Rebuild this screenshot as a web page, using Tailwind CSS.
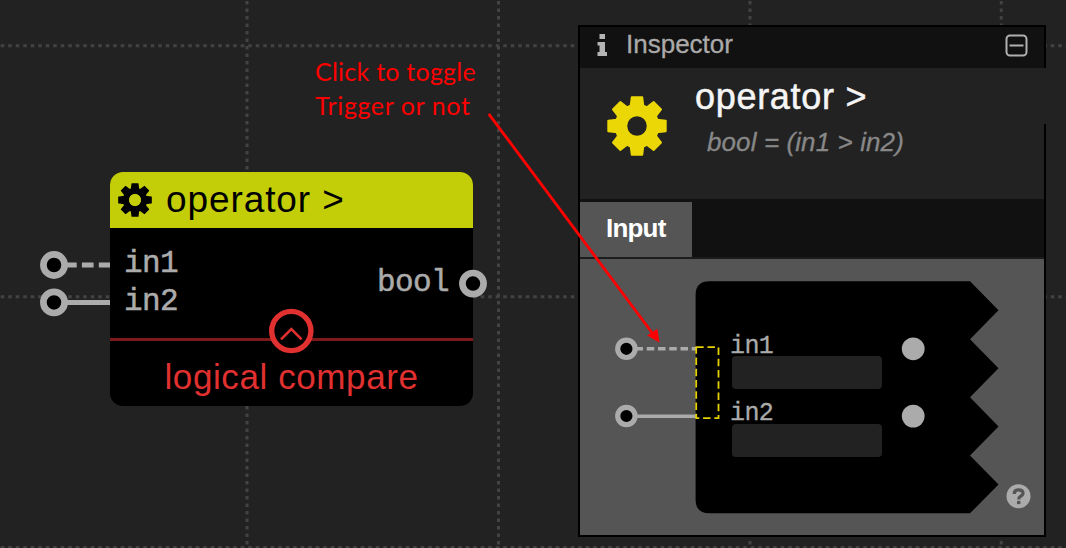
<!DOCTYPE html>
<html lang="en">
<head>
<meta charset="utf-8">
<title>Operator node</title>
<script src="https://cdn.jsdelivr.net/npm/@tailwindcss/browser@4"></script>
</head>
<body class="relative h-[548px] w-[1066px] overflow-hidden bg-[#222222] font-['Liberation_Sans',sans-serif]">

<!-- canvas grid -->
<svg class="absolute inset-0" width="1066" height="548" fill="none" stroke="#434343" stroke-width="3">
  <g stroke-dasharray="3.6 3.9">
    <path d="M.7 45.7H1066M.7 296.7H1066M.7 547.5H1066"/>
    <path d="M247 1V548M498.5 1V548M750 1V548M1001.2 1V548"/>
  </g>
</svg>

<!-- operator node -->
<section class="absolute left-[110px] top-[172px] flex h-[234px] w-[363px] flex-col overflow-hidden rounded-[13px] bg-black">
  <header class="flex h-14 shrink-0 items-center bg-[#c3ce08] pl-[8px]">
    <svg class="shrink-0" width="34" height="34" viewBox="-30 -30 60 60">
      <defs><path id="tooth" d="M-7.6 -18L-6.2 -28.9Q-6 -29.7 -5.3 -29.7H5.3Q6 -29.7 6.2 -28.9L7.6 -18Z"/></defs>
      <g fill="#000">
        <use href="#tooth"/><use href="#tooth" transform="rotate(45)"/><use href="#tooth" transform="rotate(90)"/><use href="#tooth" transform="rotate(135)"/><use href="#tooth" transform="rotate(180)"/><use href="#tooth" transform="rotate(225)"/><use href="#tooth" transform="rotate(270)"/><use href="#tooth" transform="rotate(315)"/>
      </g>
      <circle r="16" fill="none" stroke="#000" stroke-width="11"/>
      <circle r="10.5" fill="#c3ce08"/>
    </svg>
    <h1 class="ml-[14px] text-[37px] leading-[56px] tracking-[0.9px] text-black">operator &gt;</h1>
  </header>
  <div class="flex h-[113px] shrink-0 items-start justify-between border-b-[3px] border-[#7d1919] pl-[14px] pr-[24px] font-['Liberation_Mono',monospace] text-[31px] tracking-[-0.6px] text-[#ababab] [-webkit-text-stroke:0.5px_#ababab]">
    <div class="pt-[17px] leading-[37.5px]"><p>in1</p><p>in2</p></div>
    <p class="pt-[36px] leading-[37px]">bool</p>
  </div>
  <p class="pt-[16px] text-center text-[35px] leading-[40px] tracking-[0.6px] text-[#e03030]">logical compare</p>
</section>

<!-- node ports and collapse button -->
<svg class="absolute inset-0" width="1066" height="548" fill="none">
  <g stroke="#ababab">
    <path stroke-width="5" stroke-dasharray="11.7 5.2" d="M65 265H110"/>
    <path stroke-width="5" d="M65 302.4H110"/>
    <g fill="#000" stroke-width="6.7"><circle cx="54" cy="265" r="10.6"/><circle cx="54" cy="302.4" r="10.6"/><circle cx="473" cy="283.6" r="10.6"/></g>
  </g>
  <g stroke="#e03030">
    <circle cx="291.3" cy="331" r="19.6" fill="#000" stroke-width="5.4"/>
    <path stroke-width="2.6" d="M281 339.3L291.3 329L301.6 339.3"/>
  </g>
</svg>

<!-- inspector window -->
<aside class="absolute left-[578px] top-[25px] flex h-[512px] w-[468px] flex-col border-2 border-black bg-[#222222] text-[#aaaaaa]">
  <header class="flex h-[41px] shrink-0 items-center bg-[#111111] pb-[5px] pl-[17px] pr-[16px]">
    <svg width="11" height="22" viewBox="0 0 11 22" fill="#b4b4b4"><path d="M2.5 0H8V5H2.5ZM.5 8H8V18H10V22H.5V18H2.5V11.5H.5Z"/></svg>
    <h2 class="-mt-[2px] ml-[18px] grow text-[26px] leading-[34px] [-webkit-text-stroke:0.3px_#aaaaaa]">Inspector</h2>
    <svg width="23" height="23" viewBox="0 0 23 23" fill="none" stroke="#b0b0b0" stroke-width="2"><rect x="1.5" y="1.5" width="20" height="20" rx="3.5"/><path d="M4.5 11.5H18.5"/></svg>
  </header>
  <div class="relative flex h-[131px] shrink-0 pl-[27px]">
    <svg class="mt-[28px] shrink-0" width="60" height="60" viewBox="-30 -30 60 60">
      <g fill="#ecd706">
        <use href="#tooth"/><use href="#tooth" transform="rotate(45)"/><use href="#tooth" transform="rotate(90)"/><use href="#tooth" transform="rotate(135)"/><use href="#tooth" transform="rotate(180)"/><use href="#tooth" transform="rotate(225)"/><use href="#tooth" transform="rotate(270)"/><use href="#tooth" transform="rotate(315)"/>
      </g>
      <circle r="16" fill="none" stroke="#ecd706" stroke-width="12.5"/>
    </svg>
    <div class="ml-[28px] pt-[7px]">
      <h3 class="text-[36px] leading-[44px] tracking-[0.7px] text-[#f5f5f5] [-webkit-text-stroke:0.5px_#f5f5f5]">operator &gt;</h3>
      <p class="ml-[12px] mt-[6px] text-[26px] italic leading-[34px] tracking-[0.1px] text-[#888888] [-webkit-text-stroke:0.3px_#888888]">bool = (in1 &gt; in2)</p>
    </div>
    <span class="absolute -right-[2px] top-0 h-[56px] w-[2px] bg-[#222222]"></span>
  </div>
  <nav class="flex h-[60px] shrink-0 border-b-2 border-[#1c1c1c] bg-[#111111] pt-[3px]">
    <span class="w-[112px] bg-[#555555] pl-[26px] text-[26px] font-bold leading-[53px] tracking-[-0.8px] text-white">Input</span>
  </nav>
  <div class="relative grow bg-[#555555]">
    <svg class="absolute inset-0" width="464" height="276" viewBox="580 259 464 276" fill="none">
      <path fill="#000" d="M709.5 281.3H970L998.5 310.3L970 339.3L998.5 368.3L970 397.3L998.5 426.4L970 455.5L998.5 484.5L970 513.3H709.5Q695.6 513.3 695.6 499.5V295Q695.6 281.3 709.5 281.3Z"/>
      <g stroke="#ababab">
        <path stroke-width="3.4" stroke-dasharray="7.5 3.75" d="M635.5 348.8H696"/>
        <path stroke-width="3.4" d="M636 416.2H696"/>
        <g fill="#000" stroke-width="5.2"><circle cx="626.4" cy="348.8" r="8.7"/><circle cx="626.4" cy="416" r="8.7"/></g>
      </g>
      <g fill="#ababab"><circle cx="913.2" cy="348.8" r="11.4"/><circle cx="913.2" cy="416.1" r="11.4"/><circle cx="1018.5" cy="496.2" r="12"/></g>
      <g stroke="#555" stroke-width="3.2"><path d="M1014.2 494Q1014.2 489.8 1018.5 489.8Q1023 489.8 1023 493Q1023 495 1020.6 496.2Q1018.7 497.2 1018.7 499.5"/><path d="M1017 502.5H1020.4"/></g>
      <rect x="696.2" y="347.2" width="22.3" height="71" stroke="#e5d000" stroke-width="1.8" stroke-dasharray="7.5 3.75"/>
    </svg>
    <div class="relative ml-[150px] w-[153px] pt-[73px] font-['Liberation_Mono',monospace] text-[25px] tracking-[-0.6px] [-webkit-text-stroke:0.3px_#aaaaaa]">
      <p class="h-[24px] leading-[30px]">in1</p><div class="ml-[2px] h-[33px] w-[150px] rounded-[4px] bg-[#222222]"></div>
      <p class="mt-[10px] h-[25px] leading-[30px]">in2</p><div class="ml-[2px] h-[33px] w-[150px] rounded-[4px] bg-[#222222]"></div>
    </div>
  </div>
</aside>

<!-- annotation -->
<p class="absolute left-[315px] top-[54px] whitespace-nowrap font-['Lato',sans-serif] text-[25px] leading-[34px] tracking-[0.25px] text-[#ff0000]">Click to toggle<br><span class="tracking-[0.6px]">Trigger or not</span></p>
<svg class="absolute inset-0" width="1066" height="548"><path d="M488.7 113.8L653 334" stroke="#f00" stroke-width="2.8"/><path fill="#f00" d="M659.4 342.5L647.2 335.6L657.4 328.8Z"/></svg>
</body>
</html>
